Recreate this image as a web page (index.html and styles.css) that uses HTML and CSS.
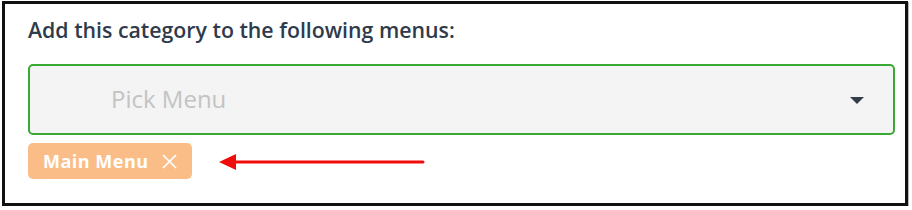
FILE: index.html
```html
<!DOCTYPE html>
<html>
<head>
<meta charset="utf-8">
<link rel="stylesheet" href="styles.css">
</head>
<body>
<div class="frame">
  <h2 class="title">Add this category to the following menus:</h2>
  <div class="select">
    <span class="placeholder">Pick Menu</span>
    <svg class="caret" width="14" height="8" viewBox="0 0 14 8"><path d="M0 0H14L7 7Z" fill="#333c47"/></svg>
  </div>
  <div class="tags">
    <span class="tag">Main Menu <svg class="x" width="15" height="15" viewBox="0 0 15 15"><path d="M1 1L14 14M14 1L1 14" stroke="#fff" stroke-width="1.7"/></svg></span>
    <svg class="arrow" width="206" height="18" viewBox="0 0 206 18"><path d="M16 9H204" stroke="#f10c0c" stroke-width="3" stroke-linecap="round"/><path d="M0 9L17 1V17Z" fill="#f10c0c"/></svg>
  </div>
</div>
</body>
</html>
```
FILE: styles.css
```css
html, body { margin: 0; padding: 0; background: #fff; }
body { font-family: "Open Sans", "Liberation Sans", sans-serif; }
.frame {
  margin: 1px 0 0 2px;
  width: 900px;
  height: 199px;
  border: 3px solid #111;
  box-sizing: content-box;
  padding: 0;
  box-shadow: 1px 1px 0 #bbb;
}
.title {
  margin: 0;
  padding: 12px 0 0 23px;
  font-size: 21.3px;
  font-weight: 600;
  color: #2f3b4a;
  line-height: 28px;
}
.select {
  margin: 20px 10px 0 23px;
  height: 67px;
  border: 2px solid #3aa835;
  border-radius: 5px;
  background: #f4f4f4;
  display: flex;
  align-items: center;
  padding: 0 29px 0 81px;
}
.placeholder {
  flex: 1;
  font-size: 24px;
  color: #c3c3c3;
  padding-bottom: 2px;
}
.caret { margin-top: 2px; }
.tags {
  display: flex;
  align-items: center;
  margin: 8px 0 0 23px;
}
.tag {
  display: inline-flex;
  align-items: center;
  height: 36px;
  width: 164px;
  box-sizing: border-box;
  padding: 0 0 0 15px;
  background: #fbbd88;
  border-radius: 5px;
  color: #fff;
  font-weight: 700;
  font-size: 18px;
  letter-spacing: 0.5px;
}
.x { margin-left: 13px; }
.arrow { margin-left: 27px; margin-top: 1px; }
```
